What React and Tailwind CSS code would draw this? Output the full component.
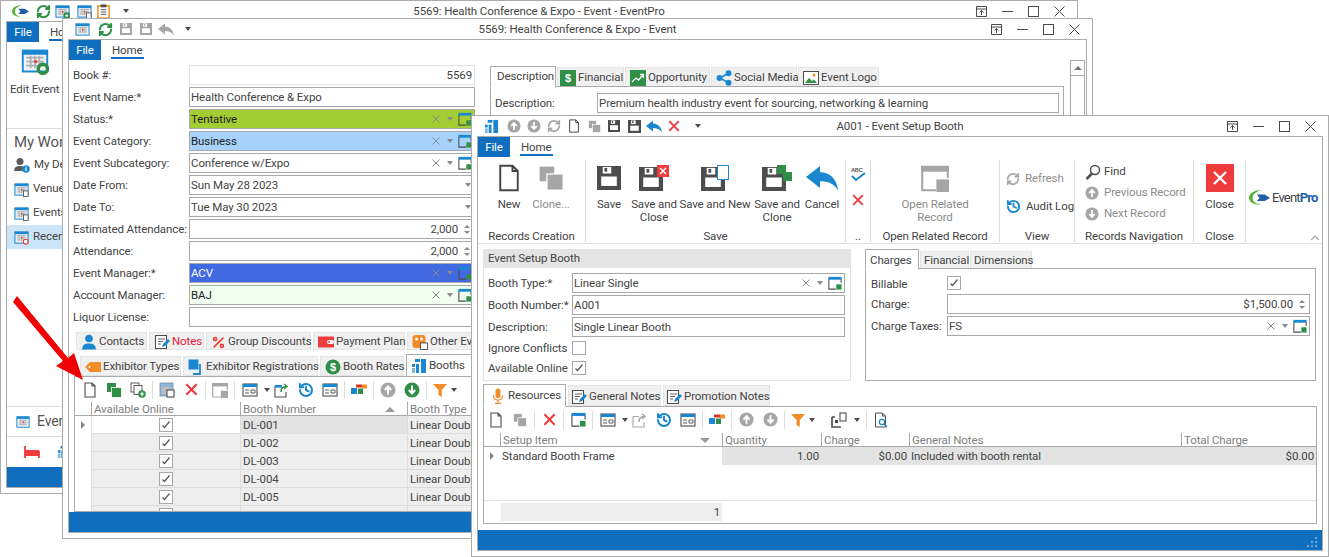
import React from 'react';
import { History, Percent, RefreshCw } from 'lucide-react';

const BLUE = '#1b87d0';
const GREEN = '#2f8f46';
const RED = '#ee3b3b';
const ORANGE = '#f28c28';
const GRAY = '#a6a6a6';
const DARK = '#4d4d4d';

const Svg = ({ s = 16, h, children }) => (
  <svg width={s} height={h || s} viewBox="0 0 16 16" className="shrink-0">
    {children}
  </svg>
);

// toolbar and ribbon glyphs, all drawn on a 16 unit grid
const Doc = ({ s, c = DARK }) => (
  <Svg s={s}>
    <path d="M3 1h7l3 3v11H3z M10 1v3h3" fill="none" stroke={c} strokeWidth="1.1" />
  </Svg>
);
const Clone = ({ s, c = GRAY, c2 }) => (
  <Svg s={s}>
    <rect x="1" y="1" width="9" height="9" fill={c} />
    <rect x="5.5" y="5.5" width="10" height="10" fill={c2 || c} stroke="#fff" strokeWidth="0.8" />
  </Svg>
);
const Cross = ({ s, c = RED, w = 2.2 }) => (
  <Svg s={s}>
    <path d="M2.5 2.5l11 11M13.5 2.5l-11 11" stroke={c} strokeWidth={w} fill="none" />
  </Svg>
);
const Floppy = ({ s, c = DARK }) => (
  <Svg s={s}>
    <rect width="16" height="16" fill={c} />
    <rect x="3.8" y="0.6" width="5.7" height="4.4" fill="#fff" />
    <rect x="5" y="1.3" width="1.8" height="2.5" fill={c} />
    <rect x="2.8" y="7" width="10.4" height="6.3" fill="#fff" />
  </Svg>
);
const Undo = ({ s = 16, c = BLUE }) => (
  <svg width={s} height={s * 0.8} viewBox="0 0 16 12.8" className="shrink-0">
    <path d="M7 .5L0 6 7 11.500V8.100c4 0 7 1.200 9 4.500-.6-5.500-4-8.900-9-9.100z" fill={c} />
  </svg>
);
const Circle = ({ s, c = GRAY, down }) => (
  <Svg s={s}>
    <circle cx="8" cy="8" r="7.5" fill={c} />
    <path d={down ? 'M8 3.5v8M4.8 8L8 11.5 11.2 8' : 'M8 12.5v-8M4.8 8L8 4.5 11.2 8'} stroke="#fff" strokeWidth="2" fill="none" />
  </Svg>
);
const Lookup = ({ s = 14, top = BLUE }) => (
  <Svg s={s}>
    <path d="M1 3v12h8M15 3v5" stroke={DARK} strokeWidth="1.2" fill="none" />
    <rect x="0.5" y="1" width="15" height="3.2" fill={top} />
    <rect x="9.5" y="9.5" width="6" height="6" fill={GREEN} />
  </Svg>
);
const OpenRec = ({ s, c = GRAY }) => (
  <Svg s={s}>
    <path d="M.7 4v11h8M15.3 4v4" stroke={c} strokeWidth="1.2" fill="none" />
    <rect y="1" width="16" height="3.4" fill={c} />
    <rect x="8.8" y="8.8" width="7.2" height="7.2" fill={c} />
  </Svg>
);
const Calendar = ({ s, badge }) => (
  <Svg s={s}>
    <rect x="1" y="2" width="14" height="12" fill="#eef3f8" stroke={BLUE} strokeWidth="1.1" />
    <rect x="1" y="2" width="14" height="2.4" fill={BLUE} />
    <path d="M3 6h10M3 8.3h10M3 10.6h10M5.5 5v7M8 5v7M10.5 5v7" stroke="#b0b0b0" strokeWidth="1" />
    <rect x="7.6" y="7.6" width="1.6" height="1.6" fill={RED} />
    {badge === 'gear' && <circle cx="12.5" cy="12.5" r="2.6" fill="none" stroke={GREEN} strokeWidth="2" />}
    {badge === 'doc' && <rect x="10" y="9.5" width="5" height="6" fill="#fff" stroke={DARK} strokeWidth="0.9" />}
    {badge === 'clock' && <circle cx="12.5" cy="12.5" r="2.6" fill="#fff" stroke={RED} strokeWidth="1.2" />}
  </Svg>
);
const Sync = ({ s = 16, c = GREEN, w = 3.2 }) => <RefreshCw size={s} color={c} strokeWidth={w} className="shrink-0" />;
const Audit = ({ s = 16 }) => <History size={s} color={BLUE} strokeWidth={3} className="shrink-0" />;
const Layout = () => (
  <Svg>
    <rect x="1" y="2" width="14" height="12" fill="#fff" stroke={DARK} strokeWidth="1.1" />
    <rect x="1" y="2" width="14" height="3" fill={BLUE} />
    <path d="M3 8h4M3 11h4M9 8h4v3H9z" stroke={DARK} strokeWidth="0.9" fill="none" />
  </Svg>
);
const WinArrow = () => (
  <Svg>
    <path d="M1 4v11h11v-5" stroke={DARK} strokeWidth="1.1" fill="none" />
    <rect x="1" y="3" width="7" height="2.6" fill={BLUE} />
    <path d="M7 10c0-4 2-5.5 5-5.5M10 2l3 2.5L10 7" stroke={GREEN} strokeWidth="1.5" fill="none" />
  </Svg>
);
const WinArrowGray = () => (
  <Svg>
    <path d="M1 4.5V15h11v-5M1 4.5h6" stroke={GRAY} strokeWidth="1.1" fill="none" />
    <path d="M7 10c0-4 2-5.5 5-5.5M10 2l3 2.5L10 7" stroke={GRAY} strokeWidth="1.5" fill="none" />
  </Svg>
);
const Blocks = () => (
  <Svg>
    <rect x="5" y="2.5" width="6" height="3" fill="#d9342b" />
    <rect x="11" y="2.5" width="5" height="4" fill={ORANGE} />
    <rect x="0" y="6" width="6" height="6" fill={BLUE} />
    <rect x="7" y="6.5" width="5" height="5.5" fill={GREEN} />
  </Svg>
);
const Funnel = () => (
  <Svg>
    <path d="M1 2h14L9.8 8v7L6.5 13V8z" fill={ORANGE} />
  </Svg>
);
const Caret = ({ c = DARK }) => <span style={{ borderTopColor: c }} className="block w-0 h-0 border-x-[3.5px] border-x-transparent border-t-[4px]" />;
const CloneAdd = () => (
  <Svg>
    <rect x="1" y="1" width="8" height="9" fill="#fff" stroke={DARK} strokeWidth="0.9" />
    <rect x="4" y="3.5" width="8" height="9" fill="#fff" stroke={DARK} strokeWidth="0.9" />
    <circle cx="12" cy="12" r="3.8" fill={GREEN} />
    <path d="M12 9.8v4.4M9.8 12h4.4" stroke="#fff" strokeWidth="1.2" />
  </Svg>
);
const FormCopy = () => (
  <Svg>
    <rect x="1" y="1" width="13" height="13" fill="#8fb7d8" stroke="#6f8ea8" strokeWidth="0.8" />
    <rect x="3" y="5" width="9" height="7" fill="#bcbcbc" />
    <rect x="8" y="8" width="7" height="7" fill="#fff" stroke={DARK} strokeWidth="1.1" />
  </Svg>
);
const Columns = () => (
  <Svg>
    <path d="M1 5v10h9M1 5h3" stroke={DARK} strokeWidth="1.7" fill="none" />
    <rect x="4" y="8" width="3" height="3" fill={DARK} />
    <rect x="9" y="1" width="6" height="8" fill="#fff" stroke={DARK} strokeWidth="1.1" />
  </Svg>
);
const DocSearch = () => (
  <Svg>
    <path d="M2.5 1h7l3 3v11h-10z M9.5 1v3h3" fill="none" stroke={DARK} strokeWidth="1" />
    <circle cx="9" cy="10" r="2.6" fill="#fff" stroke={BLUE} strokeWidth="1.2" />
    <path d="M11 12l3 3" stroke={BLUE} strokeWidth="1.5" />
  </Svg>
);
const Booth = ({ s }) => (
  <Svg s={s}>
    <rect x="10" y="1" width="5" height="14" fill={BLUE} />
    <rect x="4" y="1" width="5" height="3" fill={BLUE} />
    <rect x="1" y="6" width="3" height="3" fill={BLUE} />
    <rect x="5" y="6" width="3" height="9" fill={BLUE} />
    <rect x="1" y="10" width="3" height="5" fill="#7db8e0" />
  </Svg>
);
const Note = () => (
  <Svg>
    <path d="M1.5 1.5h11v13h-11z" fill="#fff" stroke={DARK} strokeWidth="1.1" />
    <path d="M4 5h7M4 7.5h5M4 10h3" stroke={DARK} strokeWidth="0.9" />
    <path d="M8 13l1-3 5-5 2 2-5 5z" fill={BLUE} />
  </Svg>
);
const Mic = () => (
  <Svg>
    <rect x="5.5" y="0.5" width="5" height="9.5" rx="2.5" fill={ORANGE} />
    <path d="M3.5 7.5c0 6 9 6 9 0M8 12.5V15M5 15.3h6" stroke={ORANGE} strokeWidth="1.2" fill="none" />
  </Svg>
);
const Person = () => (
  <Svg>
    <circle cx="8" cy="4.5" r="3.8" fill={BLUE} />
    <path d="M1 15.5c.5-5 3-6 7-6s6.5 1 7 6z" fill={BLUE} />
  </Svg>
);
const Card = () => (
  <Svg>
    <rect y="2.5" width="16" height="11" fill={RED} />
    <rect x="9" y="6" width="7" height="4" rx="2" fill="#fff" />
    <circle cx="11.2" cy="8" r="1" fill={RED} />
  </Svg>
);
const People = () => (
  <Svg>
    <rect x="0.5" y="1" width="13" height="13" rx="3" fill={ORANGE} />
    <circle cx="4.5" cy="5" r="1.5" fill="#fff" />
    <circle cx="9.5" cy="5" r="1.5" fill="#fff" />
    <rect x="8.5" y="9" width="7" height="6.5" fill="#fff" stroke={DARK} strokeWidth="0.9" />
  </Svg>
);
const Tag = () => (
  <Svg>
    <path d="M5 3h11v10H5L0 8z" fill={ORANGE} />
    <circle cx="4.5" cy="8" r="1" fill="#fff" />
  </Svg>
);
const Squares = () => (
  <Svg>
    <rect x="0.5" y="0.5" width="10" height="10" fill={BLUE} />
    <path d="M12 5v10H5" stroke={BLUE} strokeWidth="1.8" fill="none" />
  </Svg>
);
const Dollar = ({ square }) => (
  <Svg>
    {square ? <rect width="16" height="16" fill={GREEN} /> : <circle cx="8" cy="8" r="7.5" fill={GREEN} />}
    <text x="8" y="12" fontSize="11" fontWeight="700" fill="#fff" textAnchor="middle" fontFamily="Liberation Sans, sans-serif">$</text>
  </Svg>
);
const Trend = () => (
  <Svg>
    <rect width="16" height="16" fill={GREEN} />
    <path d="M2 12l4-4 2.5 2L13 5M10 4.5h3.5V8" stroke="#fff" strokeWidth="1.3" fill="none" />
  </Svg>
);
const Share = () => (
  <Svg>
    <path d="M4 8l8-4.5M4 8l8 4.5" stroke={BLUE} strokeWidth="1.5" />
    <circle cx="3.5" cy="8" r="3" fill={BLUE} />
    <circle cx="12.5" cy="3.2" r="3" fill={BLUE} />
    <circle cx="12.5" cy="12.8" r="3" fill={BLUE} />
  </Svg>
);
const Picture = () => (
  <Svg>
    <rect x="0.5" y="1.5" width="15" height="13" fill="#fff" stroke={DARK} strokeWidth="1" />
    <circle cx="11" cy="5" r="1.5" fill={ORANGE} />
    <path d="M2 13l4-5 3 3 2-1.5 3 3.5z" fill={GREEN} />
  </Svg>
);
const Magnifier = () => (
  <Svg>
    <circle cx="10" cy="6" r="4.5" fill="none" stroke={DARK} strokeWidth="1.5" />
    <path d="M7 9.5L1.5 15" stroke={DARK} strokeWidth="2.5" />
  </Svg>
);
const SpellCheck = () => (
  <svg width="16" height="16" viewBox="0 0 16 16" className="shrink-0">
    <text x="1" y="5.5" fontSize="5.5" fontWeight="700" fill={DARK} fontFamily="Liberation Sans, sans-serif">ABC</text>
    <path d="M2 10l4 4 9-7" stroke={BLUE} strokeWidth="2" fill="none" />
  </svg>
);
const ProfileI = () => (
  <Svg>
    <circle cx="6" cy="4.5" r="3.5" fill="#5a5a5a" />
    <path d="M0 14c.3-4 2.5-5 6-5s5 1 5 5z" fill="#5a5a5a" />
    <circle cx="12" cy="12" r="3.8" fill={BLUE} />
    <rect x="11.4" y="11" width="1.2" height="3" fill="#fff" />
    <rect x="11.4" y="9.3" width="1.2" height="1.2" fill="#fff" />
  </Svg>
);
const Bed = () => (
  <Svg>
    <path d="M1 2v12M15 7v7M1 11h14" stroke={RED} strokeWidth="1.8" fill="none" />
    <rect x="1" y="6" width="14" height="5" fill={RED} />
  </Svg>
);
const Logo = ({ s = 18 }) => (
  <svg width={s} height={s * 0.72} viewBox="0 0 24 17" className="shrink-0">
    <path d="M15 0C6 0 0 4 0 9c0 5 7 8 14 8-6-1-10-4-10-8 0-4 5-8 11-9z" fill="#55b133" />
    <path d="M9 5h9l6 4-6 3.5H9l3-3.5z" fill="#1f5fa8" />
  </svg>
);

const WinButtons = ({ gap }) => (
  <div className={`flex items-center ${gap}`}>
    <svg width="11" height="11" viewBox="0 0 11 11">
      <path d="M.5.5h10v10H.5zM.5 3h10M5.5 9V4.5M3.5 6.5l2-2 2 2" fill="none" stroke="#4a4a4a" />
    </svg>
    <svg width="11" height="11" viewBox="0 0 11 11">
      <path d="M0 5.5h11" stroke="#4a4a4a" />
    </svg>
    <svg width="11" height="11" viewBox="0 0 11 11">
      <rect x=".5" y=".5" width="10" height="10" fill="none" stroke="#4a4a4a" />
    </svg>
    <svg width="11" height="11" viewBox="0 0 11 11">
      <path d="M.5.5l10 10M10.5.5l-10 10" stroke="#4a4a4a" />
    </svg>
  </div>
);

const Window = ({ className, title, quick, children }) => (
  <div className={`absolute flex flex-col bg-white border border-[#ababab] ${className}`}>
    <div className="grid grid-cols-[1fr_auto_1fr] items-center h-[20px] shrink-0 text-[#444]">
      <div className="flex items-center min-w-0">{quick}</div>
      <div className="pt-[2px]">{title}</div>
      <div className="flex justify-end pr-[12px]">
        <WinButtons gap="gap-[15px]" />
      </div>
    </div>
    <div className="relative flex flex-col flex-1 min-h-0 mx-[5px] mb-[5px] border border-[#ababab] overflow-hidden">
      {children}
    </div>
  </div>
);

const RibbonTabs = () => (
  <div className="flex items-center h-[20px] shrink-0">
    <div className="flex items-center justify-center w-[32px] h-[20px] pt-[2px] bg-[#0f6ebd] text-white">File</div>
    <div className="relative ml-[10px] px-px pt-[1px] text-[#444]">
      Home
      <span className="absolute left-0 right-0 bottom-0 h-[2px] bg-[#0f6ebd]" />
    </div>
  </div>
);

const StatusBar = ({ grip }) => (
  <div className="relative h-[20px] shrink-0 mt-auto bg-[#0f6ebd]">
    {grip && (
      <svg width="12" height="12" viewBox="0 0 12 12" className="absolute right-[4px] bottom-[2px]">
        <path d="M9 1h2v2H9zM5 5h2v2H5zM9 5h2v2H9zM1 9h2v2H1zM5 9h2v2H5zM9 9h2v2H9z" fill="#6ba4d6" />
      </svg>
    )}
  </div>
);

const Q = ({ w = 'w-[20px]', children }) => <div className={`flex items-center justify-center shrink-0 ${w}`}>{children}</div>;

const Tool = ({ children }) => <div className="flex items-center justify-center w-[24px] shrink-0">{children}</div>;
const Drop = ({ w = 'w-[33px]', pad = 'pl-[5px]', gap = 'gap-[6px]', children }) => (
  <div className={`flex items-center shrink-0 ${w} ${pad} ${gap}`}>
    {children}
    <Caret />
  </div>
);
const Sep = () => <div className="w-[5px] h-[18px] shrink-0 flex justify-center"><span className="w-px bg-[#dcdcdc]" /></div>;

const Tab = ({ w, active, icon, text, red }) => (
  <div
    className={`flex items-center gap-[2px] shrink-0 pl-[4px] border ${w} ${
      active ? 'h-[23px] bg-white border-[#ababab] border-b-white -mb-px z-10' : 'h-[20px] pt-[2px] bg-[#f0f0f0] border-[#e4e4e4]'
    } ${red ? 'text-[#e8173c]' : 'text-[#444]'}`}
  >
    {icon}
    <span className="whitespace-nowrap">{text}</span>
  </div>
);

const Check = ({ on = true }) => (
  <div className="flex items-center justify-center w-[14px] h-[14px] shrink-0 bg-white border border-[#a8a8a8]">
    {on && (
      <svg width="10" height="10" viewBox="0 0 10 10">
        <path d="M1.5 5.5l2 2 5-6" stroke="#555" strokeWidth="1.2" fill="none" />
      </svg>
    )}
  </div>
);

const Field = ({ value, bg = 'bg-white', color = 'text-[#444]', lookup, date, spin, right, light, w = 'flex-1' }) => (
  <div className={`flex items-center h-[20px] pl-[1px] pr-[2px] border ${w} ${bg} ${color} ${light ? 'border-[#e2e2e2]' : 'border-[#a8a8a8]'}`}>
    <span className={`flex-1 pt-[2px] whitespace-nowrap ${right ? 'text-right' : ''}`}>{value}</span>
    {lookup && (
      <div className="flex items-center">
        <svg width="8" height="8" viewBox="0 0 8 8"><path d="M.5.5l7 7M7.5.5l-7 7" stroke="#8a8a8a" /></svg>
        <span className="ml-[7px] mr-[5px]"><Caret c="#8a8a8a" /></span>
        <Lookup />
      </div>
    )}
    {date && <span className="mr-[1px]"><Caret c="#8a8a8a" /></span>}
    {spin && (
      <div className="flex flex-col items-center gap-[3px] ml-[6px] mr-[2px]">
        <span className="block w-0 h-0 border-x-[3px] border-x-transparent border-b-[3px] border-b-[#8a8a8a]" />
        <span className="block w-0 h-0 border-x-[3px] border-x-transparent border-t-[3px] border-t-[#8a8a8a]" />
      </div>
    )}
  </div>
);

const Row = ({ label, star, labelW = 'w-[116px]', h = 'h-[22px]', children }) => (
  <div className={`flex items-start shrink-0 ${h}`}>
    <div className={`shrink-0 leading-[20px] whitespace-nowrap text-[#444] ${labelW}`}>
      {label}
      {star && '*'}
    </div>
    {children}
  </div>
);

const HeadCell = ({ w, text, sort }) => (
  <div className={`relative flex items-center shrink-0 h-[13px] pl-[2px] pt-[2px] border-l border-[#a8a8a8] text-[#808080] whitespace-nowrap ${w}`}>
    {text}
    {sort && <span className={`absolute right-[12px] block w-0 h-0 border-x-[5px] border-x-transparent ${sort === 'up' ? 'border-b-[5px] border-b-[#999]' : 'border-t-[5px] border-t-[#999]'}`} />}
  </div>
);

const Indicator = () => (
  <div className="flex items-center justify-center w-[16px] shrink-0">
    <span className="block w-0 h-0 border-y-[4px] border-y-transparent border-l-[4px] border-l-[#888]" />
  </div>
);

const eventFields = [
  { label: 'Book #:', value: '5569', right: true, light: true },
  { label: 'Event Name:', star: true, value: 'Health Conference & Expo' },
  { label: 'Status:', star: true, value: 'Tentative', lookup: true, bg: 'bg-[#a2cd33]', color: 'text-[#222]' },
  { label: 'Event Category:', value: 'Business', lookup: true, bg: 'bg-[#a6d2fb]', color: 'text-[#222]' },
  { label: 'Event Subcategory:', value: 'Conference w/Expo', lookup: true },
  { label: 'Date From:', value: 'Sun May 28 2023', date: true },
  { label: 'Date To:', value: 'Tue May 30 2023', date: true },
  { label: 'Estimated Attendance:', value: '2,000', right: true, spin: true },
  { label: 'Attendance:', value: '2,000', right: true, spin: true },
  { label: 'Event Manager:', star: true, value: 'ACV', lookup: true, bg: 'bg-[#4169e1]', color: 'text-white' },
  { label: 'Account Manager:', value: 'BAJ', lookup: true, bg: 'bg-[#f0fff0]', color: 'text-[#222]' },
  { label: 'Liquor License:', value: '' },
];

const boothRows = ['DL-001', 'DL-002', 'DL-003', 'DL-004', 'DL-005', 'DL-006'];

const BackWindow = () => (
  <Window
    className="left-0 top-0 w-[1078px] h-[494px]"
    title="5569: Health Conference & Expo - Event - EventPro"
    quick={
      <div className="flex items-center pl-[11px]">
        <Q w="w-[16px] mr-[7px]"><Logo s={17} /></Q>
        <Q w="w-[16px] mr-[3px]"><Sync s={15} /></Q>
        <Q w="w-[16px] mr-[6px]"><Calendar s={15} badge="gear" /></Q>
        <Q w="w-[16px] mr-[3px]"><Calendar s={15} badge="doc" /></Q>
        <Q w="w-[16px] mr-[7px]">
          <Svg s={15}>
            <rect x="2" y="2" width="12" height="13" fill="#fff" stroke={ORANGE} strokeWidth="1.6" />
            <path d="M5 6h6M5 8.5h6M5 11h6" stroke={DARK} />
            <rect x="5" y="0.5" width="6" height="3" fill={DARK} />
          </Svg>
        </Q>
        <Q w="w-[16px]"><Caret /></Q>
      </div>
    }
  >
    <RibbonTabs />
    <div className="flex flex-col w-[55px] flex-1 min-h-0 text-[#444]">
      <div className="flex flex-col items-start pl-[3px] h-[87px] shrink-0 whitespace-nowrap border-b border-[#dcdcdc] w-[400px]">
        <div className="ml-[11px] mt-[5px]"><Calendar s={28} badge="gear" /></div>
        <div className="mt-[6px]">Edit Event</div>
      </div>
      <div className="pl-[7px] pt-[2px] h-[24px] text-[15px] text-[#555] whitespace-nowrap">My Work</div>
      <div className="flex flex-col">
        {[
          ['My Desktop', <ProfileI key="a" />],
          ['Venues', <Calendar key="b" s={15} badge="doc" />],
          ['Events', <Calendar key="c" s={15} badge="doc" />],
          ['Recent', <Calendar key="d" s={15} badge="clock" />],
        ].map(([text, icon], i) => (
          <div key={text} className={`flex items-center gap-[4px] h-[24px] pl-[7px] whitespace-nowrap ${i === 3 ? 'bg-[#cce4f7]' : ''}`}>
            {icon}
            {text}
          </div>
        ))}
      </div>
      <div className="flex-1" />
      <div className="flex items-center gap-[7px] pl-[9px] h-[31px] border-y border-[#dcdcdc] text-[14px] text-[#555] whitespace-nowrap w-[400px]">
        <Calendar s={14} />
        Events
      </div>
      <div className="flex items-center gap-[17px] pl-[17px] h-[30px]">
        <Bed />
        <Booth s={14} />
      </div>
    </div>
    <StatusBar />
  </Window>
);

const EventWindow = () => (
  <Window
    className="left-[62px] top-[18px] w-[1031px] h-[521px]"
    title="5569: Health Conference & Expo - Event"
    quick={
      <div className="flex items-center pl-[8px]">
        <Q w="w-[22px]"><Calendar s={15} /></Q>
        <Q w="w-[24px]"><Sync s={15} /></Q>
        <Q w="w-[18px]"><Floppy s={12} c={GRAY} /></Q>
        <Q w="w-[21px]"><Floppy s={12} c={GRAY} /></Q>
        <Q w="w-[20px]"><Undo s={16} c={GRAY} /></Q>
        <Q w="w-[24px]"><Caret /></Q>
      </div>
    }
  >
    <RibbonTabs />
    <div className="flex flex-1 min-h-0 text-[#444]">
      <div className="flex flex-col w-[421px] shrink-0 pt-[5px]">
        <div className="flex flex-col pl-[4px] pr-[15px]">
          {eventFields.map(({ label, star, ...f }) => (
            <Row key={label} label={label} star={star}>
              <Field {...f} />
            </Row>
          ))}
        </div>
        <div className="flex items-end gap-[2px] h-[18px] mt-[3px] ml-[7px] overflow-hidden">
          <Tab w="w-[71px] !h-[18px]" icon={<Person />} text="Contacts" />
          <Tab w="w-[55px] !h-[18px]" icon={<Note />} text="Notes" red />
          <Tab w="w-[105px] !h-[18px]" icon={<Percent size={15} color={RED} strokeWidth={2.5} className="shrink-0" />} text="Group Discounts" />
          <Tab w="w-[92px] !h-[18px]" icon={<Card />} text="Payment Plan" />
          <Tab w="w-[90px] !h-[18px]" icon={<People />} text="Other Events" />
        </div>
        <div className="flex items-end gap-[2px] h-[23px] mt-[3px] pl-[11px] overflow-hidden">
          <Tab w="w-[101px]" icon={<Tag />} text="Exhibitor Types" />
          <Tab w="w-[135px]" icon={<Squares />} text="Exhibitor Registrations" />
          <Tab w="w-[84px]" icon={<Dollar />} text="Booth Rates" />
          <Tab w="w-[66px]" active icon={<Booth />} text="Booths" />
        </div>
        <div className="flex flex-col flex-1 min-h-0 ml-[5px] border border-[#ababab] overflow-hidden">
          <div className="flex items-center h-[24px] pl-[3px] pt-[1px] shrink-0">
            <Tool><Doc /></Tool>
            <Tool><Clone c={GREEN} /></Tool>
            <Tool><CloneAdd /></Tool>
            <Sep />
            <Tool><FormCopy /></Tool>
            <Tool><Cross s={15} /></Tool>
            <Sep />
            <Tool><OpenRec /></Tool>
            <Sep />
            <Drop><Layout /></Drop>
            <Tool><WinArrow /></Tool>
            <Tool><Audit /></Tool>
            <Tool><Layout /></Tool>
            <Sep />
            <Tool><Blocks /></Tool>
            <Sep />
            <Tool><Circle c={GRAY} /></Tool>
            <Tool><Circle c={GREEN} down /></Tool>
            <Sep />
            <Drop pad="pl-[3px]" gap="gap-[3px]"><Funnel /></Drop>
          </div>
          <div className="flex items-end h-[15px] shrink-0 border-b border-[#a8a8a8] pl-[16px]">
            <HeadCell w="w-[149px]" text="Available Online" />
            <HeadCell w="w-[167px]" text="Booth Number" sort="up" />
            <HeadCell w="w-[100px]" text="Booth Type" />
          </div>
          {boothRows.map((num, i) => (
            <div key={num} className={`flex h-[18px] shrink-0 ${i === 0 ? 'bg-white' : 'bg-[#eeeeee]'}`}>
              {i === 0 ? <Indicator /> : <div className="w-[16px] shrink-0 bg-white" />}
              <div className="flex items-center justify-center w-[149px] shrink-0 border-l border-b border-[#dddddd]"><Check /></div>
              <div className={`flex items-center pl-[2px] pt-[2px] w-[167px] shrink-0 border-l border-b border-[#dddddd] ${i === 0 ? 'bg-[#e3e3e3]' : ''}`}>{num}</div>
              <div className={`flex items-center pl-[2px] pt-[2px] w-[100px] shrink-0 border-l border-b border-[#dddddd] whitespace-nowrap ${i === 0 ? 'bg-[#eeeeee]' : ''}`}>Linear Double</div>
            </div>
          ))}
        </div>
      </div>
      <div className="flex flex-col flex-1 min-w-0 pt-[5px]">
        <div className="flex items-end gap-[1px] h-[22px] -mb-px">
          <Tab w="w-[66px] !h-[22px] !pl-[6px]" active text="Description" />
          <Tab w="w-[67px] !pl-[2px]" icon={<Dollar square />} text="Financial" />
          <Tab w="w-[85px]" icon={<Trend />} text="Opportunity" />
          <Tab w="w-[86px]" icon={<Share />} text="Social Media" />
          <Tab w="w-[81px]" icon={<Picture />} text="Event Logo" />
        </div>
        <div className="flex flex-1 min-h-0 gap-[6px]">
          <div className="flex items-start flex-1 h-[200px] pt-[6px] pl-[4px] pr-[4px] border border-[#ababab]">
            <div className="w-[102px] leading-[20px]">Description:</div>
            <Field value="Premium health industry event for sourcing, networking & learning" />
          </div>
          <div className="flex flex-col w-[16px] -mt-[26px] pr-px">
            <div className="flex items-center justify-center h-[16px] border border-[#a8a8a8]">
              <span className="block w-0 h-0 border-x-[4px] border-x-transparent border-b-[4px] border-b-[#777]" />
            </div>
            <div className="flex-1 border-x border-[#a8a8a8]" />
          </div>
        </div>
      </div>
    </div>
    <StatusBar />
  </Window>
);

const Large = ({ w, icon, lines, gray }) => (
  <div className={`flex flex-col items-center shrink-0 ${w}`}>
    <div className="flex items-center justify-center h-[38px] pb-[2px]">{icon}</div>
    <div className={`text-center leading-[13px] whitespace-nowrap ${gray ? 'text-[#8c8c8c]' : 'text-[#444]'}`}>
      {lines.map((l) => <div key={l}>{l}</div>)}
    </div>
  </div>
);

const Small = ({ icon, text, gray, h = 'h-[21px]', gap = 'gap-[5px]' }) => (
  <div className={`flex items-center whitespace-nowrap ${h} ${gap} ${gray ? 'text-[#8c8c8c]' : 'text-[#444]'}`}>
    {icon}
    {text}
  </div>
);

const Group = ({ w, label, children }) => (
  <div className={`flex flex-col shrink-0 h-[82px] border-r border-[#dcdcdc] ${w}`}>
    <div className="flex flex-1 min-h-0">{children}</div>
    <div className="text-center leading-[12px] whitespace-nowrap text-[#444]">{label}</div>
  </div>
);

const Badge = ({ icon, badge }) => (
  <div className="flex items-end">
    {icon}
    {badge}
  </div>
);

const Ribbon = () => (
  <div className="flex shrink-0 pt-[3px] h-[87px] border-b border-[#e2e2e2]">
    <Group w="w-[108px]" label="Records Creation">
      <div className="flex pl-[10px]">
        <Large w="w-[42px]" icon={<Doc s={28} c="#444" />} lines={['New']} />
        <Large w="w-[42px]" icon={<Clone s={26} />} lines={['Clone...']} gray />
      </div>
    </Group>
    <Group w="w-[260px]" label="Save">
      <Large w="w-[46px]" icon={<Floppy s={24} />} lines={['Save']} />
      <Large
        w="w-[44px]"
        lines={['Save and', 'Close']}
        icon={
          <Badge
            icon={<Floppy s={24} />}
            badge={
              <span className="-ml-[6px] mb-[14px] flex items-center justify-center w-[12px] h-[12px] bg-[#ee3b3b]">
                <svg width="8" height="8" viewBox="0 0 8 8"><path d="M1 1l6 6M7 1L1 7" stroke="#fff" strokeWidth="1.5" /></svg>
              </span>
            }
          />
        }
      />
      <Large
        w="w-[78px]"
        lines={['Save and New']}
        icon={
          <Badge
            icon={<Floppy s={24} />}
            badge={<span className="-ml-[8px] mb-[11px] block w-[12px] h-[15px] bg-white border-[1.5px] border-[#1b87d0]" />}
          />
        }
      />
      <Large
        w="w-[46px]"
        lines={['Save and', 'Clone']}
        icon={
          <Badge
            icon={<Floppy s={24} />}
            badge={
              <span className="-ml-[9px] mb-[10px] relative block w-[15px] h-[16px]">
                <span className="absolute left-0 top-0 w-[9px] h-[9px] bg-[#2f8f46]" />
                <span className="absolute right-0 bottom-0 w-[9px] h-[9px] bg-[#2f8f46]" />
              </span>
            }
          />
        }
      />
      <Large w="w-[44px]" icon={<Undo s={32} />} lines={['Cancel']} />
    </Group>
    <Group w="w-[25px]" label="..">
      <div className="flex flex-col items-center w-full pt-[6px] gap-[11px]">
        <SpellCheck />
        <Cross s={14} />
      </div>
    </Group>
    <Group w="w-[129px]" label="Open Related Record">
      <Large w="w-full" icon={<OpenRec s={28} />} lines={['Open Related', 'Record']} gray />
    </Group>
    <Group w="w-[75px]" label="View">
      <div className="flex flex-col pl-[6px] pt-[8px] gap-[7px]">
        <Small gray icon={<RefreshCw size={14} color={GRAY} strokeWidth={3} />} text="Refresh" />
        <Small icon={<Audit s={15} />} text="Audit Log" />
      </div>
    </Group>
    <Group w="w-[119px]" label="Records Navigation">
      <div className="flex flex-col pl-[10px] pt-[1px]">
        <Small icon={<Magnifier />} text="Find" gap="gap-[3px]" />
        <Small gray icon={<Circle s={14} />} text="Previous Record" />
        <Small gray icon={<Circle s={14} down />} text="Next Record" />
      </div>
    </Group>
    <Group w="w-[52px]" label="Close">
      <Large
        w="w-full"
        icon={
          <span className="flex items-center justify-center w-[28px] h-[28px] bg-[#ee3b3b]">
            <svg width="16" height="16" viewBox="0 0 16 16"><path d="M2 2l12 12M14 2L2 14" stroke="#fff" strokeWidth="2.4" /></svg>
          </span>
        }
        lines={['Close']}
      />
    </Group>
    <div className="relative flex flex-1 items-start pl-[3px] pt-[30px]">
      <Logo s={21} />
      <span className="ml-[2px] -tracking-[0.8px] text-[13px] leading-[15px] text-[#444]">
        Event<span className="font-bold text-[#1f5fa8]">Pro</span>
      </span>
      <svg width="10" height="6" viewBox="0 0 10 6" className="absolute right-[2px] top-[75px]">
        <path d="M1 5l4-4 4 4" stroke="#aaa" fill="none" strokeWidth="1.2" />
      </svg>
    </div>
  </div>
);

const BoothWindow = () => (
  <Window
    className="left-[471px] top-[115px] w-[858px] h-[442px]"
    title="A001 - Event Setup Booth"
    quick={
      <div className="flex items-center pl-[9px]">
        <Q w="w-[20px] mr-[3px]"><Booth s={15} /></Q>
        <Q><Circle s={14} /></Q>
        <Q><Circle s={14} down /></Q>
        <Q><RefreshCw size={14} color={GRAY} strokeWidth={3} /></Q>
        <Q><Doc s={14} c="#444" /></Q>
        <Q><Clone s={13} /></Q>
        <Q><Floppy s={12} /></Q>
        <Q><Floppy s={13} /></Q>
        <Q><Undo s={16} /></Q>
        <Q><Cross s={14} /></Q>
        <Q w="w-[27px]"><Caret /></Q>
      </div>
    }
  >
    <RibbonTabs />
    <div className="flex flex-col flex-1 min-h-0 text-[#444]">
      <Ribbon />
      <div className="flex gap-[14px] h-[137px] shrink-0 pt-[5px] pl-[5px]">
        <div className="flex flex-col w-[368px] border border-[#e2e2e2]">
          <div className="h-[18px] pl-[4px] leading-[17px] bg-[#e4e4e4] shrink-0">Event Setup Booth</div>
          <div className="flex flex-col pl-[4px] pr-[5px] pt-[5px]">
            <Row label="Booth Type:" star labelW="w-[84px]">
              <Field value="Linear Single" lookup />
            </Row>
            <Row label="Booth Number:" star labelW="w-[84px]">
              <Field value="A001" />
            </Row>
            <Row label="Description:" labelW="w-[84px]" h="h-[21px]">
              <Field value="Single Linear Booth" />
            </Row>
            <Row label="Ignore Conflicts" labelW="w-[84px]" h="h-[20px]">
              <div className="mt-[3px]"><Check on={false} /></div>
            </Row>
            <Row label="Available Online" labelW="w-[84px]" h="h-[20px]">
              <div className="mt-[3px]"><Check /></div>
            </Row>
          </div>
        </div>
        <div className="flex flex-col w-[451px]">
          <div className="flex items-end gap-[1px] h-[20px] -mb-px shrink-0">
            <Tab w="w-[54px] !h-[21px] pt-[2px]" active text="Charges" />
            <Tab w="w-[49px] !h-[18px] !pl-[3px]" text="Financial" />
            <Tab w="w-[62px] !h-[18px] !pl-[3px]" text="Dimensions" />
          </div>
          <div className="flex flex-col flex-1 pl-[5px] pr-[5px] pt-[5px] border border-[#ababab]">
            <Row label="Billable" labelW="w-[76px]" h="h-[20px]">
              <div className="mt-[2px]"><Check /></div>
            </Row>
            <Row label="Charge:" labelW="w-[76px]">
              <Field value="$1,500.00" right spin />
            </Row>
            <Row label="Charge Taxes:" labelW="w-[76px]">
              <Field value="FS" lookup />
            </Row>
          </div>
        </div>
      </div>
      <div className="flex items-end gap-[2px] h-[23px] mt-[2px] pl-[5px] shrink-0">
        <Tab w="w-[83px] !pl-[6px]" active icon={<Mic />} text="Resources" />
        <Tab w="w-[93px] !h-[21px] !pl-[2px]" icon={<Note />} text="General Notes" />
        <Tab w="w-[107px] !h-[21px] !pl-[2px]" icon={<Note />} text="Promotion Notes" />
      </div>
      <div className="flex flex-col h-[118px] ml-[5px] w-[834px] shrink-0 border border-[#ababab]">
        <div className="flex items-center h-[25px] shrink-0">
          <Tool><Doc /></Tool>
          <Tool><Clone s={14} /></Tool>
          <Sep />
          <Tool><Cross s={15} /></Tool>
          <Sep />
          <Tool><Lookup s={15} /></Tool>
          <Sep />
          <Drop><Layout /></Drop>
          <Tool><WinArrowGray /></Tool>
          <Tool><Audit /></Tool>
          <Tool><Layout /></Tool>
          <Sep />
          <Tool><Blocks /></Tool>
          <Sep />
          <Tool><Circle s={15} /></Tool>
          <Tool><Circle s={15} down /></Tool>
          <Sep />
          <Drop pad="pl-[3px]" gap="gap-[3px]"><Funnel /></Drop>
          <Drop w="w-[44px]" pad="pl-[11px]" gap="gap-[7px]"><Columns /></Drop>
          <Sep />
          <Tool><DocSearch /></Tool>
        </div>
        <div className="flex items-end h-[15px] shrink-0 border-b border-[#a8a8a8] pl-[16px]">
          <HeadCell w="w-[222px]" text="Setup Item" sort="down" />
          <HeadCell w="w-[99px]" text="Quantity" />
          <HeadCell w="w-[88px]" text="Charge" />
          <HeadCell w="w-[272px]" text="General Notes" />
          <HeadCell w="w-[135px]" text="Total Charge" />
        </div>
        <div className="flex h-[18px] shrink-0">
          <Indicator />
          <div className="flex items-center pl-[2px] pt-[2px] w-[222px] shrink-0">Standard Booth Frame</div>
          <div className="flex items-center justify-end pr-[2px] pt-[2px] w-[99px] shrink-0 bg-[#e3e3e3]">1.00</div>
          <div className="flex items-center justify-end pr-[2px] pt-[2px] w-[88px] shrink-0 bg-[#e3e3e3]">$0.00</div>
          <div className="flex items-center pl-[2px] pt-[2px] w-[272px] shrink-0 bg-[#e3e3e3]">Included with booth rental</div>
          <div className="flex items-center justify-end pr-[2px] pt-[2px] flex-1 bg-[#e3e3e3]">$0.00</div>
        </div>
        <div className="flex-1" />
        <div className="flex items-center h-[23px] shrink-0 border-t border-[#e2e2e2] pl-[17px]">
          <div className="w-[221px] h-[18px] leading-[18px] pr-[2px] text-right bg-[#eeeeee]">1</div>
        </div>
      </div>
      <StatusBar grip />
    </div>
  </Window>
);

const App = () => (
  <div className="relative w-[1329px] h-[557px] bg-white overflow-hidden font-['Roboto',sans-serif] text-[11.5px] tracking-[-0.1px]">
    <BackWindow />
    <EventWindow />
    <svg width="100" height="100" viewBox="0 0 100 100" className="absolute left-0 top-[290px]">
      <path d="M13 12L17 6 68 68 74 63 83 90 56 76 63 71z" fill="#f00000" />
    </svg>
    <BoothWindow />
  </div>
);

export default App;
